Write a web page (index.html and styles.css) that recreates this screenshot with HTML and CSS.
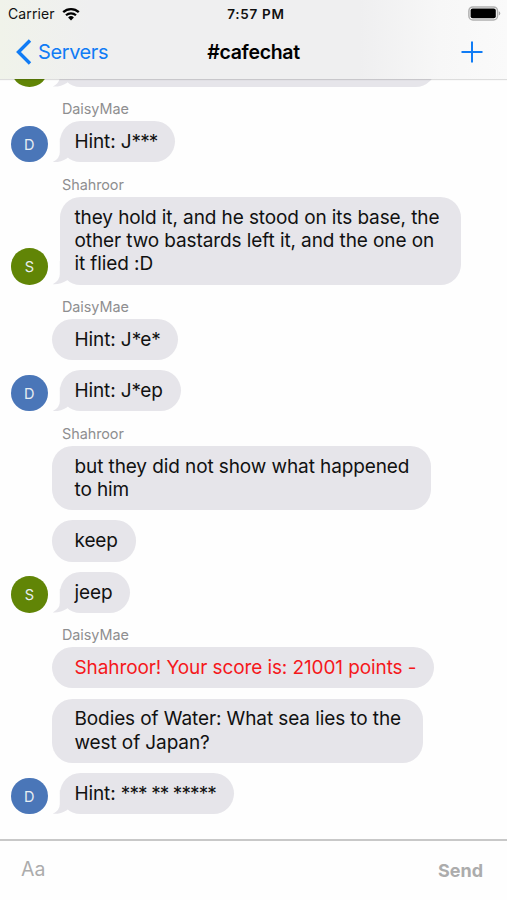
FILE: index.html
```html
<!DOCTYPE html>
<html lang="en">
<head>
    <meta charset="UTF-8">
    <meta name="viewport" content="width=device-width, initial-scale=1.0">
    <title>#cafechat</title>
    <link rel="stylesheet" href="styles.css">
</head>
<body>
    <header class="top">
        <div class="status-bar">
            <div class="carrier">
                <span>Carrier</span>
                <svg class="wifi" viewBox="0 0 18 14" width="18" height="14">
                    <path d="M1.2 5.2a11.2 11.2 0 0 1 15.6 0" fill="none" stroke="#000" stroke-width="2.3"/>
                    <path d="M4 8.3a7.2 7.2 0 0 1 10 0" fill="none" stroke="#000" stroke-width="2.2"/>
                    <path d="M6.1 10.5a4.2 4.2 0 0 1 5.8 0L9 13.5z" fill="#000"/>
                </svg>
            </div>
            <div class="clock">7:57 PM</div>
            <svg class="battery" viewBox="0 0 33 15" width="33" height="15">
                <rect x="0.9" y="0.9" width="28.6" height="13" rx="4" fill="#fff" stroke="#b0b0b0" stroke-width="1.5"/>
                <rect x="2.6" y="2.6" width="25.2" height="9.6" rx="2" fill="#000"/>
                <path d="M30.8 5.2a2.4 2.4 0 0 1 0 4.4z" fill="#a8a8a8"/>
            </svg>
        </div>
        <nav class="nav-bar">
            <a class="back" href="#">
                <svg viewBox="0 0 16 26" width="16" height="26">
                    <path d="M14 1.5L2.5 13 14 24.5" fill="none" stroke="#107cf5" stroke-width="3.4"/>
                </svg>
                <span>Servers</span>
            </a>
            <h1>#cafechat</h1>
            <a class="add" href="#">
                <svg viewBox="0 0 22 22" width="22" height="22">
                    <path d="M11 0.5v21M0.5 11h21" fill="none" stroke="#107cf5" stroke-width="2"/>
                </svg>
            </a>
        </nav>
    </header>

    <main class="chat">
        <!-- scrolled under the nav bar -->
        <div class="row">
            <div class="avatar green"></div>
            <div class="bubble tail scrolled"></div>
        </div>

        <div class="name">DaisyMae</div>
        <div class="row">
            <div class="avatar blue">D</div>
            <div class="bubble tail">Hint: J<span class="stars">***</span></div>
        </div>

        <div class="name">Shahroor</div>
        <div class="row">
            <div class="avatar green">S</div>
            <div class="bubble tail multi">they hold it, and he stood on its base, the<br>other two bastards left it, and the one on<br>it flied :D</div>
        </div>

        <div class="name">DaisyMae</div>
        <div class="row">
            <div class="bubble">Hint: J<span class="stars">*</span>e<span class="stars">*</span></div>
        </div>
        <div class="row">
            <div class="avatar blue">D</div>
            <div class="bubble tail">Hint: J<span class="stars">*</span>ep</div>
        </div>

        <div class="name">Shahroor</div>
        <div class="row">
            <div class="bubble multi">but they did not show what happened<br>to him</div>
        </div>
        <div class="row">
            <div class="bubble">keep</div>
        </div>
        <div class="row">
            <div class="avatar green">S</div>
            <div class="bubble tail">jeep</div>
        </div>

        <div class="name">DaisyMae</div>
        <div class="row">
            <div class="bubble score">Shahroor! Your score is: 21001 points -</div>
        </div>
        <div class="row">
            <div class="bubble multi">Bodies of Water: What sea lies to the<br>west of Japan?</div>
        </div>
        <div class="row">
            <div class="avatar blue">D</div>
            <div class="bubble tail">Hint: <span class="stars">*** ** *****</span></div>
        </div>
    </main>

    <footer class="composer">
        <span class="placeholder">Aa</span>
        <span class="send">Send</span>
    </footer>
</body>
</html>
```
FILE: styles.css
```css
:root {
    --ios-blue: #107cf5;
    --bubble: #e6e5ea;
    --grey-text: #8e8e90;
}

* {
    margin: 0;
    padding: 0;
    box-sizing: border-box;
}

body {
    height: 900px;
    display: flex;
    flex-direction: column;
    overflow: hidden;
    background: #fefefe;
    font-family: Inter, "Liberation Sans", sans-serif;
    color: #111;
}

/* Status bar + navigation */
.top {
    height: 79px;
    flex-shrink: 0;
    background: linear-gradient(90deg, #f0f3ea 0, #efeff0 90px, #efeff0 360px, #f7f7f7 440px, #fafafa 100%);
    box-shadow: 0 1px 1px rgba(0, 0, 0, 0.13);
    z-index: 1;
}

.status-bar {
    height: 27px;
    padding: 0 6px 0 8px;
    display: grid;
    grid-template-columns: 1fr auto 1fr;
    align-items: center;
    font-size: 14px;
}

.carrier {
    display: flex;
    align-items: center;
    gap: 7px;
    letter-spacing: 0.1px;
}

.clock {
    font-size: 13.5px;
    font-weight: 600;
    letter-spacing: 0.7px;
    margin-left: 3px;
}

.battery {
    justify-self: end;
}

.nav-bar {
    height: 50px;
    padding: 0 16px;
    display: grid;
    grid-template-columns: 1fr auto 1fr;
    align-items: center;
}

.back {
    display: flex;
    align-items: center;
    gap: 6px;
    color: var(--ios-blue);
    text-decoration: none;
    font-size: 20px;
    letter-spacing: -0.4px;
}

h1 {
    font-size: 19.5px;
    font-weight: 600;
    letter-spacing: -0.3px;
    color: #000;
}

.add {
    justify-self: end;
    display: flex;
    margin-right: 8px;
}

/* Messages */
.chat {
    flex: 1;
    min-height: 0;
    padding: 0 11px 24.8px;
    display: flex;
    flex-direction: column;
    justify-content: flex-end;
    overflow: hidden;
}

.row {
    display: flex;
    align-items: flex-end;
    margin-top: 10.2px;
    padding-left: 41.3px;
    flex-shrink: 0;
}

.name {
    height: 24.3px;
    margin-top: 10.2px;
    padding-left: 51px;
    line-height: 24.3px;
    flex-shrink: 0;
    font-size: 14.4px;
    letter-spacing: -0.05px;
    color: var(--grey-text);
}

.name + .row {
    margin-top: 0;
}

.avatar {
    width: 36.6px;
    height: 36.6px;
    margin-left: -41.3px;
    margin-right: 4.7px;
    border-radius: 50%;
    color: #e8eef2;
    font-size: 14.5px;
    line-height: 37px;
    text-align: center;
}

.blue {
    background: #4a76b8;
}

.green {
    background: #618506;
}

.bubble {
    position: relative;
    padding: 8.9px 18px 8.9px 22.2px;
    border-radius: 20.5px;
    background: var(--bubble);
    font-size: 19px;
    line-height: 23.3px;
    letter-spacing: -0.1px;
    white-space: nowrap;
}

.multi {
    padding-right: 22px;
}

.tail {
    margin-left: 7.5px;
    padding-left: 14.7px;
}

.tail::before {
    content: '';
    position: absolute;
    left: -7px;
    bottom: 0;
    width: 22px;
    height: 24px;
    background: var(--bubble);
    clip-path: path('M7 0V14Q7 20 0 23.6Q8 24 14 20L22 12V0Z');
}

.stars {
    letter-spacing: -0.9px;
}

.scrolled {
    width: 376px;
    height: 41px;
}

.score {
    color: #f5181c;
}

/* Input bar */
.composer {
    height: 61px;
    flex-shrink: 0;
    padding: 0 24px 0 21px;
    display: flex;
    align-items: center;
    justify-content: space-between;
    border-top: 2px solid #c8c8c8;
    color: #acacac;
}

.placeholder {
    padding-bottom: 4px;
    font-size: 19.5px;
}

.send {
    font-size: 18px;
    font-weight: 700;
}
```
